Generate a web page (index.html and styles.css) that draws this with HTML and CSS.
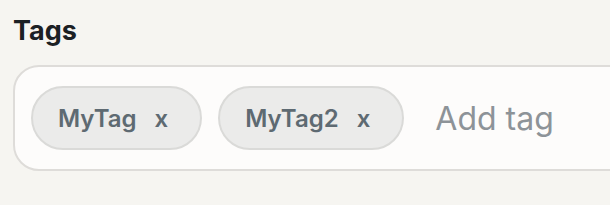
FILE: index.html
```html
<!DOCTYPE html>
<html lang="en">

<head>
  <meta charset="UTF-8">
  <meta name="viewport" content="width=device-width, initial-scale=1.0">
  <title>Tags</title>
  <link rel="stylesheet" href="styles.css">
</head>

<body>
  <div class="field">
    <label class="label" for="tag-input">Tags</label>
    <div class="tags">
      <span class="tag">MyTag <button class="remove">x</button></span>
      <span class="tag">MyTag2 <button class="remove">x</button></span>
      <input id="tag-input" class="tag-input" type="text" placeholder="Add tag">
    </div>
  </div>
</body>

</html>
```

FILE: styles.css
```css
body {
  margin: 0;
  padding: 15px 13px;
  overflow: hidden;
  background: #f6f5f1;
  font-family: Inter, "Liberation Sans", sans-serif;
}

.label {
  display: block;
  margin-bottom: 18px;
  color: #1b2024;
  font-size: 27px;
  font-weight: 700;
  line-height: 32px;
}

.tags {
  display: flex;
  align-items: center;
  gap: 16px;
  width: 640px;
  padding: 19px 16px 19px;
  border: 2px solid #dedcd9;
  border-radius: 26px;
  background: #fdfcfb;
}

.tag {
  display: flex;
  align-items: center;
  height: 60px;
  padding: 0 24px 0 25px;
  border: 2px solid #dadad8;
  border-radius: 32px;
  background: #ebebea;
  color: #5e6a72;
  font-size: 24px;
  font-weight: 600;
}

.remove {
  margin-left: 10px;
  padding: 0 8px;
  border: none;
  background: none;
  color: #5e6a72;
  font-family: inherit;
  font-size: 24px;
  font-weight: 600;
  cursor: pointer;
}

.tag-input {
  flex: 1;
  padding: 0 0 0 15px;
  border: none;
  outline: none;
  background: transparent;
  font-family: inherit;
  font-size: 32px;
}

.tag-input::placeholder {
  color: #8d9398;
}
```
